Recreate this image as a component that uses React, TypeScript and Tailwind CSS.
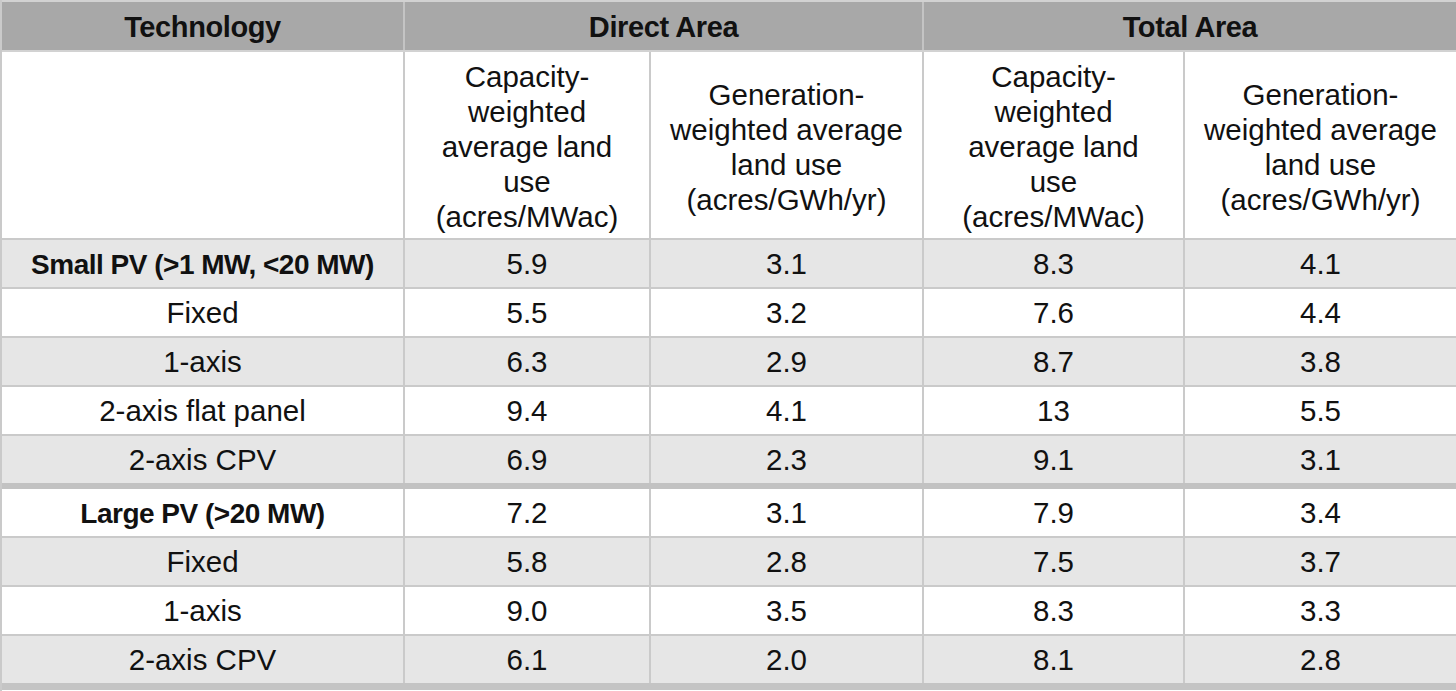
import React from 'react';

type Row = {
  label: string;
  bold?: boolean;
  shaded?: boolean;
  values: string[];
};

const smallPv: Row[] = [
  { label: 'Small PV (>1 MW, <20 MW)', bold: true, shaded: true, values: ['5.9', '3.1', '8.3', '4.1'] },
  { label: 'Fixed', values: ['5.5', '3.2', '7.6', '4.4'] },
  { label: '1-axis', shaded: true, values: ['6.3', '2.9', '8.7', '3.8'] },
  { label: '2-axis flat panel', values: ['9.4', '4.1', '13', '5.5'] },
  { label: '2-axis CPV', shaded: true, values: ['6.9', '2.3', '9.1', '3.1'] },
];

const largePv: Row[] = [
  { label: 'Large PV (>20 MW)', bold: true, values: ['7.2', '3.1', '7.9', '3.4'] },
  { label: 'Fixed', shaded: true, values: ['5.8', '2.8', '7.5', '3.7'] },
  { label: '1-axis', values: ['9.0', '3.5', '8.3', '3.3'] },
  { label: '2-axis CPV', shaded: true, values: ['6.1', '2.0', '8.1', '2.8'] },
];

const capacityLines = ['Capacity-', 'weighted', 'average land', 'use', '(acres/MWac)'];
const generationLines = ['Generation-', 'weighted average', 'land use', '(acres/GWh/yr)'];

const grid = 'grid grid-cols-[403px_246px_273px_261px_1fr]';
const cell = 'flex items-center justify-center pt-[2px] border-r-2 border-[#cacaca] last:border-r-0';

const Lines = ({ lines }: { lines: string[] }) => (
  <div className="text-center leading-[35px] pt-[1px]">
    {lines.map((l) => (
      <div key={l}>{l}</div>
    ))}
  </div>
);

const DataRow = ({ row, last }: { row: Row; last?: boolean }) => (
  <div
    className={`${grid} ${last ? 'h-[47px]' : 'h-[49px] border-b-2 border-[#cacaca]'} ${
      row.shaded ? 'bg-[#e6e6e6]' : 'bg-white'
    }`}
  >
    <div
      className={`${cell} ${
        row.bold ? 'font-bold text-[28px] tracking-[-0.5px]' : ''
      }`}
    >
      {row.label}
    </div>
    {row.values.map((v, i) => (
      <div key={i} className={cell}>
        {v}
      </div>
    ))}
  </div>
);

export default function App() {
  return (
    <div className="w-[1456px] h-[691px] overflow-hidden bg-white border-l-2 border-[#cacaca] font-['Liberation_Sans',Arial,sans-serif] text-[29.5px] text-[#111]">
      {/* Group header */}
      <div className="grid grid-cols-[403px_519px_1fr] h-[52px] bg-[#a8a8a8] border-t-2 border-b-2 border-[#d2d2d2] font-bold text-[29px] tracking-[-0.4px]">
        <div className="flex items-center justify-center pt-[3px] border-r-2 border-[#c4c4c4]">Technology</div>
        <div className="flex items-center justify-center pt-[3px] border-r-2 border-[#c4c4c4]">Direct Area</div>
        <div className="flex items-center justify-center pt-[3px]">Total Area</div>
      </div>

      {/* Column descriptions */}
      <div className={`${grid} h-[188px] border-b-2 border-[#cacaca]`}>
        <div className={cell} />
        <div className={cell}>
          <Lines lines={capacityLines} />
        </div>
        <div className={cell}>
          <Lines lines={generationLines} />
        </div>
        <div className={cell}>
          <Lines lines={capacityLines} />
        </div>
        <div className={cell}>
          <Lines lines={generationLines} />
        </div>
      </div>

      {smallPv.map((r, i) => (
        <DataRow key={r.label + i} row={r} last={i === smallPv.length - 1} />
      ))}
      <div className="h-[6px] bg-[#c2c2c2]" />

      {largePv.map((r, i) => (
        <DataRow key={r.label + i} row={r} last={i === largePv.length - 1} />
      ))}
      <div className="h-[7px] bg-[#c4c4c4]" />
    </div>
  );
}
